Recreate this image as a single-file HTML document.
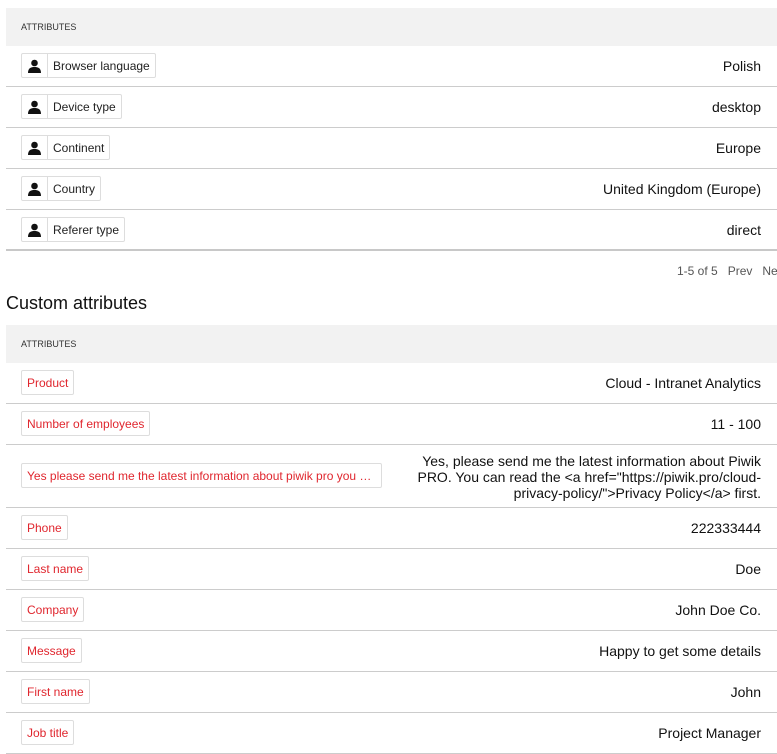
<!DOCTYPE html>
<html><head><style>
body{margin:0;background:#fff;font-family:"Liberation Sans",Arial,sans-serif;width:777px;height:749px;overflow:hidden;position:relative}
.t{position:absolute;left:6px;width:780px}
.hd{height:38px;background:#f2f2f2;font-size:9px;color:#333;padding-left:15px;line-height:38px;box-sizing:border-box}
.r{height:41px;border-bottom:1px solid #ccc;box-sizing:border-box;position:relative}
.r.last{border-bottom:2px solid #c8c8c8}
.chip{position:absolute;left:15px;top:7px;height:25px;border:1px solid #ddd;border-radius:2px;box-sizing:border-box;display:flex;align-items:center;font-size:12px;color:#222;background:#fff}
.ic{width:25px;height:23px;border-right:1px solid #ddd;display:flex;align-items:center;justify-content:center}
.lb{padding:0 5px}
.red{color:#e0262e;padding:0 5px}
.v{position:absolute;right:25px;top:0;line-height:40px;font-size:14px;color:#111;text-align:right}
</style></head><body>
<div class="t" style="top:8px">
<div class="hd">ATTRIBUTES</div>
<div class="r"><div class="chip"><div class="ic"><svg width="13" height="14" viewBox="0 0 13 14"><circle cx="6.5" cy="4" r="3.3" fill="#111"/><path d="M0 14 C0 9 3 8 6.5 8 C10 8 13 9 13 14Z" fill="#111"/></svg></div><span class="lb">Browser language</span></div><div class="v">Polish</div></div>
<div class="r"><div class="chip"><div class="ic"><svg width="13" height="14" viewBox="0 0 13 14"><circle cx="6.5" cy="4" r="3.3" fill="#111"/><path d="M0 14 C0 9 3 8 6.5 8 C10 8 13 9 13 14Z" fill="#111"/></svg></div><span class="lb">Device type</span></div><div class="v">desktop</div></div>
<div class="r"><div class="chip"><div class="ic"><svg width="13" height="14" viewBox="0 0 13 14"><circle cx="6.5" cy="4" r="3.3" fill="#111"/><path d="M0 14 C0 9 3 8 6.5 8 C10 8 13 9 13 14Z" fill="#111"/></svg></div><span class="lb">Continent</span></div><div class="v">Europe</div></div>
<div class="r"><div class="chip"><div class="ic"><svg width="13" height="14" viewBox="0 0 13 14"><circle cx="6.5" cy="4" r="3.3" fill="#111"/><path d="M0 14 C0 9 3 8 6.5 8 C10 8 13 9 13 14Z" fill="#111"/></svg></div><span class="lb">Country</span></div><div class="v">United Kingdom (Europe)</div></div>
<div class="r last"><div class="chip"><div class="ic"><svg width="13" height="14" viewBox="0 0 13 14"><circle cx="6.5" cy="4" r="3.3" fill="#111"/><path d="M0 14 C0 9 3 8 6.5 8 C10 8 13 9 13 14Z" fill="#111"/></svg></div><span class="lb">Referer type</span></div><div class="v">direct</div></div>
</div>
<div style="position:absolute;left:677px;top:264px;font-size:12px;color:#555;white-space:nowrap">1-5 of 5 &nbsp; Prev &nbsp; Ne</div>
<div style="position:absolute;left:6px;top:293px;font-size:18px;color:#111">Custom attributes</div>
<div class="t" style="top:325px">
<div class="hd">ATTRIBUTES</div>
<div class="r"><div class="chip"><span class="red">Product</span></div><div class="v">Cloud - Intranet Analytics</div></div>
<div class="r"><div class="chip"><span class="red">Number of employees</span></div><div class="v">11 - 100</div></div>
<div class="r" style="height:63px"><div class="chip" style="top:18px;width:361px"><span class="red">Yes please send me the latest information about piwik pro you …</span></div><div class="v" style="line-height:16px;top:8px;width:360px">Yes, please send me the latest information about Piwik PRO. You can read the &lt;a href="https://piwik.pro/cloud-privacy-policy/"&gt;Privacy Policy&lt;/a&gt; first.</div></div>
<div class="r"><div class="chip"><span class="red">Phone</span></div><div class="v">222333444</div></div>
<div class="r"><div class="chip"><span class="red">Last name</span></div><div class="v">Doe</div></div>
<div class="r"><div class="chip"><span class="red">Company</span></div><div class="v">John Doe Co.</div></div>
<div class="r"><div class="chip"><span class="red">Message</span></div><div class="v">Happy to get some details</div></div>
<div class="r"><div class="chip"><span class="red">First name</span></div><div class="v">John</div></div>
<div class="r"><div class="chip"><span class="red">Job title</span></div><div class="v">Project Manager</div></div>
</div>
</body></html>
